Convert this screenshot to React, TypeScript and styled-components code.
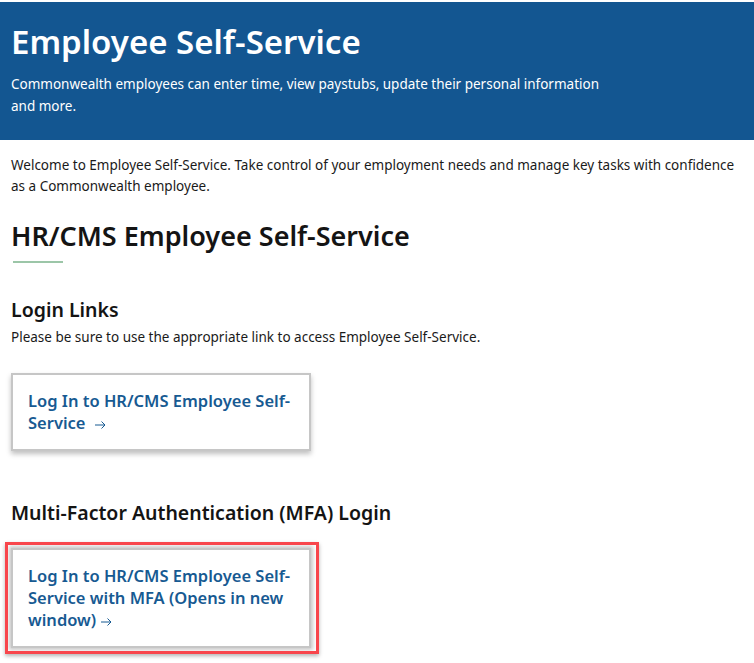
import React from 'react';
import styled, { createGlobalStyle, css } from 'styled-components';

const GlobalStyle = createGlobalStyle`
  html, body {
    margin: 0;
    padding: 0;
    background: #fff;
    font-family: "Noto Sans", "Open Sans", sans-serif;
    color: #1a1a1a;
  }
`;

const Page = styled.div`
  width: 754px;
  height: 663px;
  overflow: hidden;
  padding-top: 2px;
  box-sizing: border-box;
`;

const Banner = styled.header`
  background-color: #135691;
  height: 138px;
  padding: 20px 11px 0;
  box-sizing: border-box;
  color: #fff;
`;

const Title = styled.h1`
  margin: 0;
  font-size: 33px;
  line-height: 40px;
  font-weight: 600;
`;

const Lead = styled.p`
  margin: 11px 0 0;
  width: 610px;
  font-size: 13.5px;
  line-height: 22px;
`;

const Content = styled.main`
  padding: 15px 11px 0;
`;

const Intro = styled.p`
  margin: 0;
  font-size: 13.5px;
  line-height: 21px;
`;

const SectionTitle = styled.h2`
  margin: 21px 0 0;
  font-size: 27px;
  line-height: 36px;
  font-weight: 600;
  color: #141414;
`;

const Accent = styled.div`
  width: 50px;
  height: 2px;
  margin: 7px 0 0 2px;
  background-color: #9cc6a8;
`;

const SubTitle = styled.h3<{ $top: number }>`
  margin: ${(p) => p.$top}px 0 0;
  font-size: 19.5px;
  line-height: 26px;
  font-weight: 600;
  color: #141414;
`;

const Note = styled.p`
  margin: 4px 0 0;
  font-size: 13.5px;
  line-height: 20px;
`;

const flaggedOutline = css`
  position: relative;
  box-shadow: 0 0 4px 2px rgba(0, 0, 0, 0.22);

  &::after {
    content: '';
    position: absolute;
    top: -8px;
    left: -8px;
    right: -10px;
    bottom: -8px;
    border: 3px solid #f8464c;
    box-shadow: 0 2px 4px rgba(0, 0, 0, 0.3);
  }
`;

const Card = styled.a<{ $top: number; $flagged?: boolean }>`
  display: block;
  box-sizing: border-box;
  width: 300px;
  margin-top: ${(p) => p.$top}px;
  padding: 15px 14px 15px 15px;
  background: #fff;
  border: 2px solid #c6c6c6;
  box-shadow: 0 3px 5px rgba(0, 0, 0, 0.25);
  font-size: 16.5px;
  line-height: 22px;
  font-weight: 600;
  color: #175a92;
  text-decoration: none;
  ${(p) => p.$flagged && flaggedOutline}
`;

const Arrow = styled.svg<{ $gap: number }>`
  display: inline-block;
  width: 12px;
  height: 10px;
  margin-left: ${(p) => p.$gap}px;
  vertical-align: -0.5px;
  fill: none;
  stroke: #175a92;
  stroke-width: 1;
`;

const ArrowIcon = ({ gap }: { gap: number }) => (
  <Arrow $gap={gap} viewBox="0 0 12 10">
    <path d="M1 5h10M7.5 1.5L11 5 7.5 8.5" />
  </Arrow>
);

const App = () => (
  <Page>
    <GlobalStyle />
    <Banner>
      <Title>Employee Self-Service</Title>
      <Lead>
        Commonwealth employees can enter time, view paystubs, update their personal information and more.
      </Lead>
    </Banner>
    <Content>
      <Intro>
        Welcome to Employee Self-Service. Take control of your employment needs and manage key tasks with confidence as a Commonwealth employee.
      </Intro>
      <SectionTitle>HR/CMS Employee Self-Service</SectionTitle>
      <Accent />
      <SubTitle $top={34}>Login Links</SubTitle>
      <Note>Please be sure to use the appropriate link to access Employee Self-Service.</Note>
      <Card $top={26} href="#">
        Log In to HR/CMS Employee Self-Service <ArrowIcon gap={4} />
      </Card>
      <SubTitle $top={49}>Multi-Factor Authentication (MFA) Login</SubTitle>
      <Card $top={22} $flagged href="#">
        Log In to HR/CMS Employee Self-Service with MFA (Opens in new window) <ArrowIcon gap={0} />
      </Card>
    </Content>
  </Page>
);

export default App;
